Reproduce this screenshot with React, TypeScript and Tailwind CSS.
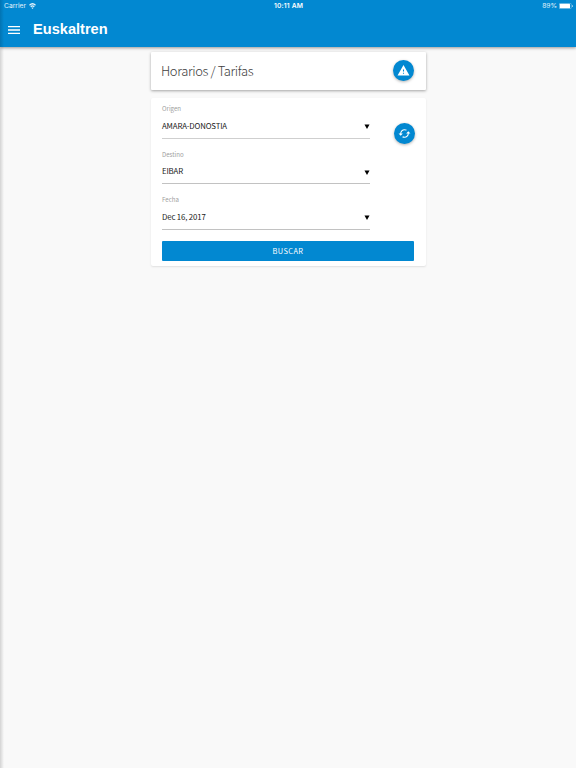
import { MdMenu, MdWarning, MdCached } from "react-icons/md"

const fields = [
  { label: "Origen", value: "AMARA-DONOSTIA", line: "border-[#cfcfcf]" },
  { label: "Destino", value: "EIBAR", line: "border-[#c2c2c2]" },
  { label: "Fecha", value: "Dec 16, 2017", line: "border-[#c2c2c2]" },
]

function StatusBar() {
  return (
    <div className="grid h-3 grid-cols-3 items-center pr-[3px] pl-1 font-['Inter',sans-serif] text-[6.7px] leading-3 text-white">
      <div className="flex items-center gap-[3px] text-white/90">
        <span>Carrier</span>
        <svg className="h-[6px] w-[7px]" viewBox="0 0 14 12" fill="none" stroke="currentColor" strokeWidth="2.4">
          <path d="M1 4.500C4.500 1 9.500 1 13 4.500M3.500 7.500C5.500 5.500 8.500 5.500 10.500 7.500" />
          <path d="M7 12L4.800 9.600Q7 8 9.200 9.600Z" fill="currentColor" stroke="none" />
        </svg>
      </div>
      <span className="text-center font-semibold tracking-[0.150px]">10:11 AM</span>
      <div className="flex items-center justify-end gap-[2px]">
        <span className="text-white/90">89%</span>
        <svg className="h-[6px] w-[14px]" viewBox="0 0 28 12" fill="none">
          <rect x="0.500" y="0.500" width="24" height="11" rx="2" stroke="white" strokeOpacity="0.6" />
          <rect x="1.500" y="1.500" width="20.500" height="9" rx="1" fill="white" />
          <path d="M26 4V8Q27.500 7.500 27.500 6Q27.500 4.500 26 4Z" fill="white" />
        </svg>
      </div>
    </div>
  )
}

export default function App() {
  return (
    <div className="relative h-screen overflow-hidden bg-[#f9f9f9] font-['Noto_Sans_CJK_SC',sans-serif]">
      <header className="h-[47px] bg-[#0288d1] shadow-[0_1px_3px_rgba(0,0,0,0.4)]">
        <StatusBar />
        <div className="flex h-[35px] items-center pl-[6px] text-white">
          <button aria-label="Menu">
            <MdMenu className="block h-4 w-4" />
          </button>
          <h1 className="mb-[2px] ml-[11px] font-['Liberation_Sans',sans-serif] text-[14.6px] leading-5 font-bold">
            Euskaltren
          </h1>
        </div>
      </header>

      <main className="mx-auto mt-[5px] w-[275px]">
        {/* Title card */}
        <section className="flex h-[38px] items-center justify-between rounded-[1px] bg-white pr-[11.5px] pl-[10.5px] shadow-[0_1px_3px_rgba(0,0,0,0.35)]">
          <h2 className="text-[13px] leading-5 font-light tracking-[-0.38px] text-[#404040]">Horarios / Tarifas</h2>
          <button
            aria-label="Avisos"
            className="mb-[1px] flex h-[21px] w-[21px] items-center justify-center rounded-full bg-[#0288d1] text-white shadow-[0_1px_3px_rgba(0,0,0,0.3)]"
          >
            <MdWarning className="h-[13px] w-[13px]" />
          </button>
        </section>

        {/* Search form */}
        <section className="mt-2 h-[168px] rounded-[2px] bg-white px-[11.5px] shadow-[0_1px_2px_rgba(0,0,0,0.1)]">
          <div className="flex justify-between">
            <div className="w-[208px]">
              {fields.map((field) => (
                <div key={field.label} className="h-[45.6px] pt-[6px]">
                  <div className="text-[6.1px] leading-[10px] text-[#a0a0a0]">{field.label}</div>
                  <div className={`flex h-[24.5px] items-center justify-between border-b ${field.line}`}>
                    <span className="text-[7.8px] leading-3 tracking-[-0.14px] text-[#212121]">{field.value}</span>
                    <svg className="mt-[2px] h-[5px] w-[6px]" viewBox="0 0 6 5">
                      <path d="M0.500 0.500H5.500L3 5Z" fill="black" />
                    </svg>
                  </div>
                </div>
              ))}
            </div>
            <button
              aria-label="Intercambiar"
              className="mt-[25px] -mr-[1px] flex h-[21px] w-[21px] items-center justify-center rounded-full bg-[#0288d1] text-white shadow-[0_1px_3px_rgba(0,0,0,0.3)]"
            >
              <MdCached className="h-[13px] w-[13px]" />
            </button>
          </div>
          <button className="mt-[6px] block h-5 w-full rounded-[1px] bg-[#0288d1] text-[7.4px] leading-5 tracking-[0.4px] text-white">
            BUSCAR
          </button>
        </section>
      </main>

      {/* Shadow cast by the closed side drawer */}
      <div className="pointer-events-none absolute inset-y-0 left-0 w-1 bg-linear-to-r from-black/15 to-transparent" />
    </div>
  )
}
